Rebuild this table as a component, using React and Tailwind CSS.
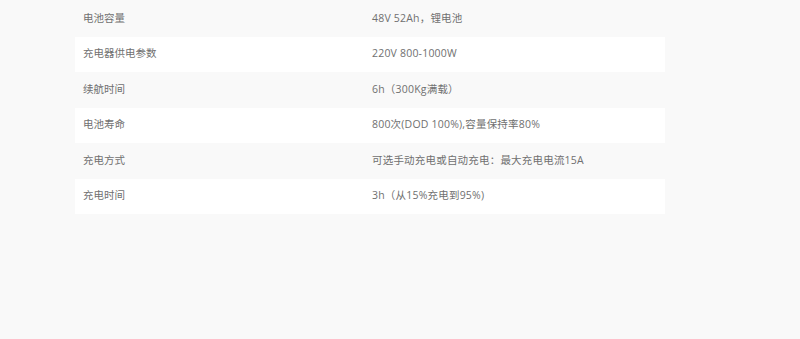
const ROWS = [
  { label: "电池容量", value: "48V 52Ah，锂电池" },
  { label: "充电器供电参数", value: "220V 800-1000W" },
  { label: "续航时间", value: "6h（300Kg满载）" },
  { label: "电池寿命", value: "800次(DOD 100%),容量保持率80%" },
  { label: "充电方式", value: "可选手动充电或自动充电：最大充电电流15A" },
  { label: "充电时间", value: "3h（从15%充电到95%)" },
];

const App = () => {
  return (
    <div
      className="w-full h-[339px] bg-[#f9f9f9] pt-[1px] pl-[75px]"
      style={{ fontFamily: '"Open Sans", "Noto Sans CJK SC", sans-serif' }}
    >
      <div className="w-[590px] flex flex-col">
        {ROWS.map((row, i) => (
          <div
            key={row.label}
            className={`flex items-center h-[35.5px] text-[10.5px] text-[#707070] ${i % 2 === 1 ? "bg-white" : "bg-[#f9f9f9]"}`}
          >
            <div className="w-[297px] pl-2 shrink-0">{row.label}</div>
            <div className="tracking-[0.2px]">{row.value}</div>
          </div>
        ))}
      </div>
    </div>
  );
};

export default App;
